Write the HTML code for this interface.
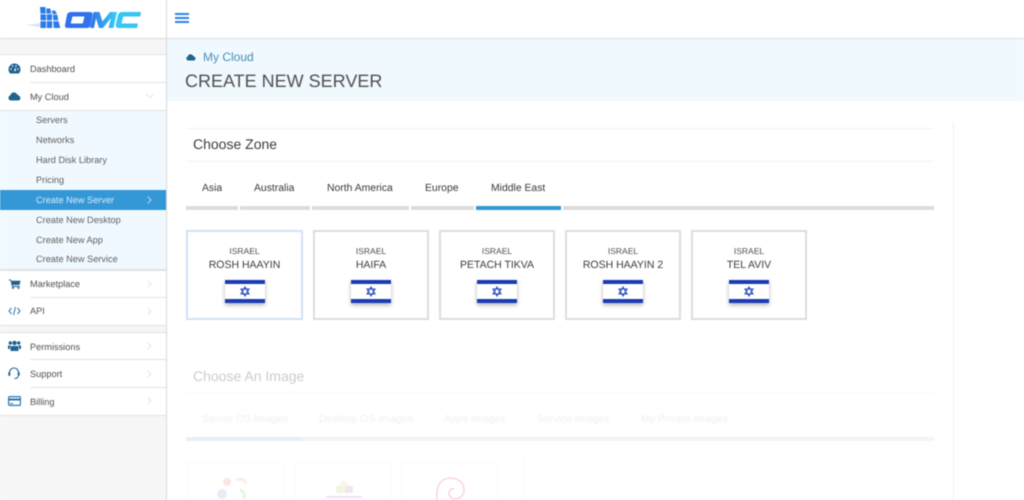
<!DOCTYPE html>
<html><head><meta charset="utf-8"><style>
html,body{margin:0;padding:0;width:1024px;height:500px;overflow:hidden;background:#fff}
html{overflow:hidden}
body{font-family:"Liberation Sans",sans-serif;position:relative;color:#555;text-rendering:geometricPrecision;filter:blur(.4px)}
.a{position:absolute}
.t{position:absolute;white-space:nowrap;line-height:14px}
.m{font-size:9.2px;left:30px;color:#4f4f4f}
.s{font-size:9.2px;left:36px;color:#5f5f5f}
.l{position:absolute;height:1px;background:#e2e2e2}
.tab{font-size:10.4px;color:#3a3a3a;top:182px}
.bar{position:absolute;top:206px;height:4px;background:#dcdcdc}
.card{position:absolute;top:230px;width:112px;height:86px;border:2px solid #dcdcdc;text-align:center;background:#fff}
.card .c{position:absolute;top:14px;left:0;right:0;font-size:8.5px;line-height:11px;color:#4f4f4f}
.card .n{position:absolute;top:26px;left:0;right:0;font-size:10.5px;line-height:14px;color:#3c3c3c}
.card svg{position:absolute;left:36px;top:48px;box-shadow:0 2px 4px rgba(0,0,0,.3)}
svg.ch{position:absolute;left:146px}
.fa{position:absolute;white-space:nowrap;line-height:14px;font-size:10.5px;color:#f0f0f0;top:412px;filter:blur(.6px)}
</style></head><body>
<!-- sidebar -->
<div class="a" style="left:166px;top:0;width:1px;height:500px;background:#d8d8d8"></div>
<div class="a" style="left:0;top:38px;width:1024px;height:1px;background:#dcdce2"></div>
<div class="a" style="left:0;top:39px;width:166px;height:461px;background:#f6f6f6"></div>
<div class="a" style="left:0;top:54px;width:166px;height:56px;background:#fff"></div>
<div class="l" style="left:0;top:54px;width:166px"></div>
<div class="l" style="left:30px;top:82px;width:136px"></div>
<div class="l" style="left:0;top:110px;width:166px"></div>
<div class="a" style="left:0;top:111px;width:166px;height:158px;background:#f0f9ff"></div>
<div class="a" style="left:0;top:190px;width:166px;height:20px;background:#3498d6"></div>
<div class="l" style="left:0;top:269px;width:166px"></div>
<div class="a" style="left:0;top:271px;width:166px;height:54px;background:#fff"></div>
<div class="l" style="left:0;top:270px;width:166px"></div>
<div class="l" style="left:30px;top:297px;width:136px"></div>
<div class="l" style="left:0;top:325px;width:166px"></div>
<div class="a" style="left:0;top:333px;width:166px;height:82px;background:#fff"></div>
<div class="l" style="left:0;top:332px;width:166px"></div>
<div class="l" style="left:30px;top:359px;width:136px"></div>
<div class="l" style="left:30px;top:387px;width:136px"></div>
<div class="l" style="left:0;top:415px;width:166px"></div>

<!-- logo -->
<svg class="a" style="left:24px;top:5px" width="120" height="26" viewBox="0 0 120 26">
<defs><linearGradient id="g" x1="0" x2="1" y1="0" y2="0"><stop offset="0" stop-color="#2f6fe8"/><stop offset="1" stop-color="#35d0f5"/></linearGradient></defs>
<path d="M2 20 L17 18 L17 22 Z" fill="#d5e6fa"/>
<g fill="#2a7ae8"><path d="M16 2h5.500v6.500h-5z"/><path d="M22.300 3.500h4l1 5h-5z"/><path d="M28 5.500h3l2 3.500h-4.500z"/><path d="M16.500 9.300h5.500v6h-5.500z"/><path d="M22.800 9.300h5.200v6h-5.200z"/><path d="M28.800 9.800h4.500l1 5.500h-5z"/><path d="M16.500 16.200h5.500v6.800h-5.500z"/><path d="M22.800 16.200h5.400v6.800h-5.400z"/><path d="M29.200 16.200h5.300l1.800 6.800h-6.500z"/></g>
<path d="M47 7h19q3 0 2.500 3l-2 10q-.5 3-4 3h-19q-3 0-2.500-3l2-10q.5-3 4-3zM48.500 11.500l-1.800 7h12l1.800-7z" fill="#2f72ec" fill-rule="evenodd"/>
<path d="M66 23l3.500-16h6l3 9.500 7.500-9.500h7l-3.500 16h-5l2.500-10-8 10h-4l-3-10-2 10z" fill="url(#g)"/>
<path d="M117 7h-19q-3 0-4 3l-2.300 10q0 3 3 3h18.300l1-4.500h-16.500l1.800-7h17z" fill="#36c6f3"/>
</svg>
<!-- hamburger -->
<div class="a" style="left:175px;top:13px;width:14px;height:2px;background:#2f80ed"></div>
<div class="a" style="left:175px;top:17px;width:14px;height:2px;background:#2f80ed"></div>
<div class="a" style="left:175px;top:21px;width:14px;height:2px;background:#2f80ed"></div>

<!-- menu icons -->
<svg class="a" style="left:8px;top:63px" width="13" height="11" viewBox="0 0 13 11"><path d="M6.500 0.500A6 6 0 0 0 .5 6.500q0 2.200 1.500 4h9q1.500-1.800 1.500-4a6 6 0 0 0-6-6z" fill="#20638f"/><circle cx="3" cy="6" r=".8" fill="#fff"/><circle cx="4.500" cy="3" r=".8" fill="#fff"/><circle cx="8" cy="3" r=".8" fill="#fff"/><circle cx="10" cy="6" r=".8" fill="#fff"/><path d="M6 8l1.500-4 .5 4z" fill="#fff"/></svg>
<svg class="a" style="left:8px;top:91px" width="13" height="10" viewBox="0 0 13 10"><path d="M3 9.500a2.600 2.600 0 0 1-.6-5.100 3.500 3.500 0 0 1 6.500-1.200 2.200 2.200 0 0 1 1.800 1.500 2.500 2.500 0 0 1-.2 4.800z" fill="#20638f"/></svg>
<svg class="a" style="left:9px;top:279px" width="12" height="10" viewBox="0 0 12 10"><path d="M0 .5h2l.4 1.200h9.100l-1 4.300H3.500l.2 1h7v1H3L1.500 1.500H0z" fill="#20638f"/><circle cx="4" cy="9" r="1" fill="#20638f"/><circle cx="9.500" cy="9" r="1" fill="#20638f"/></svg>
<svg class="a" style="left:8px;top:306px" width="13" height="10" viewBox="0 0 13 10"><path d="M3.500 2L1 5l2.500 3M9.500 2L12 5 9.500 8M7.500 1L5.500 9" fill="none" stroke="#2a75b0" stroke-width="1"/></svg>
<svg class="a" style="left:8px;top:340px" width="13" height="12" viewBox="0 0 13 12"><circle cx="6.500" cy="3" r="2.200" fill="#20638f"/><circle cx="2.300" cy="3" r="1.700" fill="#20638f"/><circle cx="10.700" cy="3" r="1.700" fill="#20638f"/><path d="M3.500 6h6q1 0 1 1.500V11h-8V7.500Q2.500 6 3.500 6zM0 5.500h2.500L1.700 9H0zM13 5.500h-2.500l.8 3.500H13z" fill="#20638f"/></svg>
<svg class="a" style="left:8px;top:367px" width="12" height="13" viewBox="0 0 12 13"><path d="M1.500 7V5.500a4.500 4.500 0 0 1 9 0V7" fill="none" stroke="#20638f" stroke-width="1.100"/><rect x=".3" y="5" width="2" height="4" rx="1" fill="#20638f"/><rect x="9.700" y="5" width="2" height="4" rx="1" fill="#20638f"/><path d="M10 9q0 2.500-3.500 2.500" fill="none" stroke="#20638f"/></svg>
<svg class="a" style="left:8px;top:396px" width="13" height="10" viewBox="0 0 13 10"><rect x=".6" y=".6" width="11.800" height="8.800" rx="1" fill="none" stroke="#2a75b0" stroke-width="1.200"/><rect x="1" y="2.500" width="11" height="2" fill="#2a75b0"/><rect x="2" y="7" width="3" height="1" fill="#2a75b0"/></svg>

<!-- menu text -->
<div class="t m" style="top:62px">Dashboard</div>
<div class="t m" style="top:90px">My Cloud</div>
<div class="t s" style="top:113px">Servers</div>
<div class="t s" style="top:133px">Networks</div>
<div class="t s" style="top:153px">Hard Disk Library</div>
<div class="t s" style="top:173px">Pricing</div>
<div class="t s" style="top:193px;color:#d5ecfa">Create New Server</div>
<div class="t s" style="top:213px">Create New Desktop</div>
<div class="t s" style="top:233px">Create New App</div>
<div class="t s" style="top:252px">Create New Service</div>
<div class="t m" style="top:277px">Marketplace</div>
<div class="t m" style="top:304px">API</div>
<div class="t m" style="top:340px">Permissions</div>
<div class="t m" style="top:367px">Support</div>
<div class="t m" style="top:395px">Billing</div>

<!-- chevrons -->
<svg class="ch" style="top:93px" width="8" height="6" viewBox="0 0 8 6"><path d="M.5 1L4 4.500 7.500 1" fill="none" stroke="#e0e0e0" stroke-width=".8"/></svg>
<svg class="ch" style="top:196px;left:147px" width="5" height="8" viewBox="0 0 5 8"><path d="M.5.500L4 4 .5 7.500" fill="none" stroke="#cde6f7" stroke-width=".8"/></svg>
<svg class="ch" style="top:280px;left:147px" width="5" height="8" viewBox="0 0 5 8"><path d="M.5.500L4 4 .5 7.500" fill="none" stroke="#e0e0e0" stroke-width=".8"/></svg>
<svg class="ch" style="top:307px;left:147px" width="5" height="8" viewBox="0 0 5 8"><path d="M.5.500L4 4 .5 7.500" fill="none" stroke="#e0e0e0" stroke-width=".8"/></svg>
<svg class="ch" style="top:342px;left:147px" width="5" height="8" viewBox="0 0 5 8"><path d="M.5.500L4 4 .5 7.500" fill="none" stroke="#e0e0e0" stroke-width=".8"/></svg>
<svg class="ch" style="top:370px;left:147px" width="5" height="8" viewBox="0 0 5 8"><path d="M.5.500L4 4 .5 7.500" fill="none" stroke="#e0e0e0" stroke-width=".8"/></svg>
<svg class="ch" style="top:397px;left:147px" width="5" height="8" viewBox="0 0 5 8"><path d="M.5.500L4 4 .5 7.500" fill="none" stroke="#e0e0e0" stroke-width=".8"/></svg>

<!-- page header -->
<div class="a" style="left:167px;top:39px;width:857px;height:62px;background:#f0f9fe"></div>
<svg class="a" style="left:186px;top:53px" width="10" height="8" viewBox="0 0 13 10"><path d="M3 9.500a2.600 2.600 0 0 1-.6-5.100 3.500 3.500 0 0 1 6.500-1.200 2.200 2.200 0 0 1 1.800 1.500 2.500 2.500 0 0 1-.2 4.800z" fill="#20638f"/></svg>
<div class="t" style="left:203px;top:50px;font-size:12px;color:#4a8dbb">My Cloud</div>
<div class="t" style="left:185px;top:71px;font-size:18px;line-height:20px;color:#505050">CREATE NEW SERVER</div>

<!-- panel -->
<div class="a" style="left:953px;top:123px;width:1px;height:377px;background:#f0f0f0"></div>
<div class="a" style="left:186px;top:128px;width:748px;height:1px;background:#f2f2f2"></div>
<div class="a" style="left:186px;top:161px;width:748px;height:1px;background:#f2f2f2"></div>
<div class="t" style="left:193px;top:136px;font-size:14px;line-height:16px;color:#3c3c3c">Choose Zone</div>

<div class="t tab" style="left:202px">Asia</div>
<div class="t tab" style="left:254px">Australia</div>
<div class="t tab" style="left:327px">North America</div>
<div class="t tab" style="left:425px">Europe</div>
<div class="t tab" style="left:491px">Middle East</div>
<div class="bar" style="left:186px;width:52px"></div>
<div class="bar" style="left:240px;width:70px"></div>
<div class="bar" style="left:312px;width:97px"></div>
<div class="bar" style="left:411px;width:63px"></div>
<div class="bar" style="left:476px;width:85px;background:#3498d6"></div>
<div class="bar" style="left:563px;width:371px"></div>

<!-- cards -->
<div class="card" style="left:186px;width:113px;border-color:#d2e1fb"><div class="c">ISRAEL</div><div class="n">ROSH HAAYIN</div>
<svg style="left:37px" width="40" height="23" viewBox="0 0 40 23"><rect width="40" height="23" fill="#fff"/><rect width="40" height="4" fill="#1a3bb4"/><rect y="19" width="40" height="4" fill="#1a3bb4"/><path d="M20 7l4 7h-8zM20 16l-4-7h8z" fill="none" stroke="#2a4cc4" stroke-width="1.100"/></svg></div>
<div class="card" style="left:313px"><div class="c">ISRAEL</div><div class="n">HAIFA</div>
<svg width="40" height="23" viewBox="0 0 40 23"><rect width="40" height="23" fill="#fff"/><rect width="40" height="4" fill="#1a3bb4"/><rect y="19" width="40" height="4" fill="#1a3bb4"/><path d="M20 7l4 7h-8zM20 16l-4-7h8z" fill="none" stroke="#2a4cc4" stroke-width="1.100"/></svg></div>
<div class="card" style="left:439px"><div class="c">ISRAEL</div><div class="n">PETACH TIKVA</div>
<svg width="40" height="23" viewBox="0 0 40 23"><rect width="40" height="23" fill="#fff"/><rect width="40" height="4" fill="#1a3bb4"/><rect y="19" width="40" height="4" fill="#1a3bb4"/><path d="M20 7l4 7h-8zM20 16l-4-7h8z" fill="none" stroke="#2a4cc4" stroke-width="1.100"/></svg></div>
<div class="card" style="left:565px"><div class="c">ISRAEL</div><div class="n">ROSH HAAYIN 2</div>
<svg width="40" height="23" viewBox="0 0 40 23"><rect width="40" height="23" fill="#fff"/><rect width="40" height="4" fill="#1a3bb4"/><rect y="19" width="40" height="4" fill="#1a3bb4"/><path d="M20 7l4 7h-8zM20 16l-4-7h8z" fill="none" stroke="#2a4cc4" stroke-width="1.100"/></svg></div>
<div class="card" style="left:691px"><div class="c">ISRAEL</div><div class="n">TEL AVIV</div>
<svg width="40" height="23" viewBox="0 0 40 23"><rect width="40" height="23" fill="#fff"/><rect width="40" height="4" fill="#1a3bb4"/><rect y="19" width="40" height="4" fill="#1a3bb4"/><path d="M20 7l4 7h-8zM20 16l-4-7h8z" fill="none" stroke="#2a4cc4" stroke-width="1.100"/></svg></div>

<!-- faded section -->
<div class="t" style="left:193px;top:368px;font-size:14px;line-height:16px;color:#ccc">Choose An Image</div>
<div class="a" style="left:186px;top:392px;width:748px;height:1px;background:#fafafa"></div>
<div class="fa" style="left:202px">Server OS Images</div>
<div class="fa" style="left:319px">Desktop OS Images</div>
<div class="fa" style="left:444px">Apps Images</div>
<div class="fa" style="left:537px">Service Images</div>
<div class="fa" style="left:641px">My Private Images</div>
<div class="a" style="left:186px;top:437px;width:748px;height:4px;background:#f4f4f4"></div>
<div class="a" style="left:186px;top:437px;width:117px;height:4px;background:#e6eff7"></div>
<div class="a" style="left:187px;top:462px;width:95px;height:38px;border:1px solid #fafafa;border-bottom:0"></div>
<div class="a" style="left:295px;top:462px;width:95px;height:38px;border:1px solid #fafafa;border-bottom:0"></div>
<div class="a" style="left:402px;top:462px;width:95px;height:38px;border:1px solid #fafafa;border-bottom:0"></div>
<div class="a" style="left:523px;top:456px;width:1px;height:44px;background:#fafafa"></div>
<svg class="a" style="left:210px;top:475px" width="50" height="25" viewBox="0 0 50 25" opacity=".2"><circle cx="17" cy="7" r="4" fill="#e88"/><path d="M26 5q8-3 10 4" stroke="#ea8" stroke-width="3" fill="none"/><circle cx="12" cy="19" r="5" fill="#8ac"/><path d="M30 15q6 2 4 9" stroke="#8c8" stroke-width="3" fill="none"/></svg>
<svg class="a" style="left:322px;top:478px" width="44" height="22" viewBox="0 0 44 22" opacity=".2"><path d="M22 2l6 6v6h-12V8z" fill="#cd8"/><path d="M14 8h7v7h-7z" fill="#bc7"/><path d="M23 8h8v7h-8z" fill="#c8b"/><path d="M4 19h36" stroke="#97c" stroke-width="2"/></svg>
<svg class="a" style="left:432px;top:476px" width="36" height="24" viewBox="0 0 36 24" opacity=".25"><path d="M5 24Q3 3 18 2 33 3 32 16q-2 7-10 7-6-2-5-7 2-4 5-3" fill="none" stroke="#e59" stroke-width="1.500"/></svg>
</body></html>
